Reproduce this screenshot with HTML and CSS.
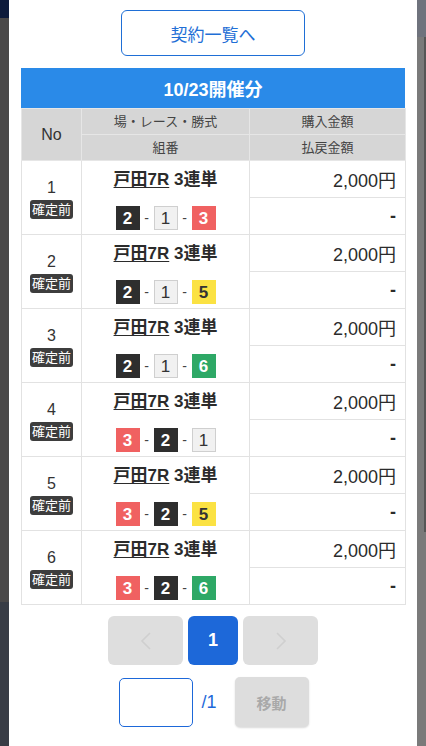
FILE: index.html
```html
<!DOCTYPE html>
<html lang="ja">
<head>
<meta charset="utf-8">
<title>契約一覧</title>
<link rel="stylesheet" href="styles.css">
</head>
<body>
<div class="screen">
  <div class="side-left">
    <div class="sl-top"></div>
    <div class="sl-mid"></div>
    <div class="sl-bot"></div>
  </div>
  <main class="modal">
    <div class="top-action">
      <button class="list-btn">契約一覧へ</button>
    </div>
    <div class="day-title">10/23開催分</div>
    <table class="bets">
      <colgroup><col class="c-no"><col class="c-race"><col class="c-amt"></colgroup>
      <thead>
        <tr><th rowspan="2" class="h-no">No</th><th>場・レース・勝式</th><th>購入金額</th></tr>
        <tr><th>組番</th><th>払戻金額</th></tr>
      </thead>
      <tbody>
        <tr><td rowspan="2" class="no"><div class="num">1</div><span class="badge">確定前</span></td>
          <td rowspan="2" class="race"><div class="race-name"><u>戸田7R</u> 3連単</div><div class="combo"><span class="b b2">2</span><span class="dash">-</span><span class="b b1">1</span><span class="dash">-</span><span class="b b3">3</span></div></td>
          <td class="amt">2,000円</td></tr>
        <tr><td class="pay">-</td></tr>
        <tr><td rowspan="2" class="no"><div class="num">2</div><span class="badge">確定前</span></td>
          <td rowspan="2" class="race"><div class="race-name"><u>戸田7R</u> 3連単</div><div class="combo"><span class="b b2">2</span><span class="dash">-</span><span class="b b1">1</span><span class="dash">-</span><span class="b b5">5</span></div></td>
          <td class="amt">2,000円</td></tr>
        <tr><td class="pay">-</td></tr>
        <tr><td rowspan="2" class="no"><div class="num">3</div><span class="badge">確定前</span></td>
          <td rowspan="2" class="race"><div class="race-name"><u>戸田7R</u> 3連単</div><div class="combo"><span class="b b2">2</span><span class="dash">-</span><span class="b b1">1</span><span class="dash">-</span><span class="b b6">6</span></div></td>
          <td class="amt">2,000円</td></tr>
        <tr><td class="pay">-</td></tr>
        <tr><td rowspan="2" class="no"><div class="num">4</div><span class="badge">確定前</span></td>
          <td rowspan="2" class="race"><div class="race-name"><u>戸田7R</u> 3連単</div><div class="combo"><span class="b b3">3</span><span class="dash">-</span><span class="b b2">2</span><span class="dash">-</span><span class="b b1">1</span></div></td>
          <td class="amt">2,000円</td></tr>
        <tr><td class="pay">-</td></tr>
        <tr><td rowspan="2" class="no"><div class="num">5</div><span class="badge">確定前</span></td>
          <td rowspan="2" class="race"><div class="race-name"><u>戸田7R</u> 3連単</div><div class="combo"><span class="b b3">3</span><span class="dash">-</span><span class="b b2">2</span><span class="dash">-</span><span class="b b5">5</span></div></td>
          <td class="amt">2,000円</td></tr>
        <tr><td class="pay">-</td></tr>
        <tr><td rowspan="2" class="no"><div class="num">6</div><span class="badge">確定前</span></td>
          <td rowspan="2" class="race"><div class="race-name"><u>戸田7R</u> 3連単</div><div class="combo"><span class="b b3">3</span><span class="dash">-</span><span class="b b2">2</span><span class="dash">-</span><span class="b b6">6</span></div></td>
          <td class="amt">2,000円</td></tr>
        <tr><td class="pay">-</td></tr>
      </tbody>
    </table>
    <nav class="pager">
      <button class="pg pg-arrow" aria-label="前へ"><svg width="12" height="20" viewBox="0 0 12 20"><path d="M10 2 L2 10 L10 18" fill="none" stroke="#cfcfcf" stroke-width="1.6"/></svg></button>
      <button class="pg pg-current">1</button>
      <button class="pg pg-arrow" aria-label="次へ"><svg width="12" height="20" viewBox="0 0 12 20"><path d="M2 2 L10 10 L2 18" fill="none" stroke="#cfcfcf" stroke-width="1.6"/></svg></button>
    </nav>
    <div class="jump">
      <input class="jump-input" type="text">
      <span class="jump-total">/1</span>
      <button class="jump-btn">移動</button>
    </div>
  </main>
  <div class="side-right">
    <div class="sr-top"></div>
    <div class="sr-body"></div>
  </div>
</div>
</body>
</html>
```

FILE: styles.css
```css
* { box-sizing: border-box; }
html, body { margin: 0; padding: 0; }
body {
  font-family: "Liberation Sans", "Noto Sans CJK JP", sans-serif;
  color: #333;
  background: #fff;
}
.screen {
  display: flex;
  width: 426px;
  height: 746px;
  overflow: hidden;
}
.side-left {
  width: 9px;
  display: flex;
  flex-direction: column;
}
.sl-top { height: 18px; background: #0e1b3b; }
.sl-mid { height: 584px; background: #4a4848; }
.sl-bot { flex: 1; background: #383c45; }
.side-right {
  width: 9px;
  display: flex;
  flex-direction: column;
}
.sr-top { height: 37px; background: #6f737d; }
.sr-body {
  flex: 1;
  background: #7a7a7a;
  display: flex;
  justify-content: flex-end;
}
.sr-body::after {
  content: "";
  width: 2px;
  height: 495px;
  background: #565656;
}
.modal {
  width: 408px;
  background: #fff;
  padding: 10px 12px 0;
}
.top-action {
  display: flex;
  justify-content: center;
  margin-bottom: 12px;
}
.list-btn {
  width: 184px;
  height: 46px;
  border: 1px solid #1f6fd6;
  border-radius: 6px;
  background: #fff;
  color: #1f6fd6;
  font-family: "Noto Sans CJK JP", sans-serif;
  font-size: 17px;
  padding: 0;
}
.day-title {
  height: 40px;
  background: #2a8ae8;
  color: #fff;
  font-weight: bold;
  font-size: 18px;
  display: flex;
  align-items: center;
  justify-content: center;
}
.bets {
  width: 384px;
  border-collapse: collapse;
  table-layout: fixed;
}
.c-no { width: 60px; }
.c-race { width: 168px; }
.c-amt { width: 156px; }
.bets th {
  background: #d6d6d6;
  border: 1px solid #e6e6e6;
  font-weight: normal;
  font-size: 13px;
  color: #444;
  height: 26px;
  padding: 0;
  line-height: 1;
}
.bets th.h-no { font-size: 16px; color: #333; }
.bets td {
  border: 1px solid #e2e2e2;
  padding: 0;
  height: 37px;
}
.no {
  text-align: center;
  vertical-align: middle;
}
.num {
  font-size: 16px;
  line-height: 18px;
  color: #333;
  margin-top: 2px;
}
.badge {
  display: inline-block;
  background: #3d3d3d;
  color: #fff;
  font-size: 13px;
  line-height: 19px;
  padding: 0 2px;
  border-radius: 3px;
  margin-top: 3px;
}
.race {
  text-align: center;
  vertical-align: top;
}
.race-name {
  font-size: 17px;
  font-weight: bold;
  line-height: 20px;
  margin-top: 9px;
  color: #2b2b2b;
}
.race-name u { text-underline-offset: 2px; }
.combo {
  display: flex;
  justify-content: center;
  align-items: center;
  margin-top: 16px;
}
.b {
  width: 24px;
  height: 24px;
  display: flex;
  align-items: center;
  justify-content: center;
  font-size: 17px;
  font-weight: bold;
  line-height: 1;
}
.b1 { background: #f1f1f1; border: 1px solid #cfcfcf; color: #333; font-weight: normal; }
.b2 { background: #2e2e2e; color: #fff; }
.b3 { background: #f06161; color: #fff; }
.b5 { background: #fbe243; color: #333; }
.b6 { background: #2ea866; color: #fff; }
.dash {
  width: 14px;
  text-align: center;
  font-size: 14px;
  color: #444;
}
.amt {
  text-align: right;
  font-size: 18px;
  padding-right: 9px !important;
  color: #2b2b2b;
}
.pay {
  text-align: right;
  font-size: 18px;
  font-weight: bold;
  padding-right: 9px !important;
  color: #2b2b2b;
}
.pager {
  display: flex;
  justify-content: center;
  gap: 5px;
  margin-top: 11px;
}
.pg {
  height: 49px;
  border: none;
  border-radius: 6px;
  padding: 0;
  display: flex;
  align-items: center;
  justify-content: center;
  font-family: inherit;
}
.pg-arrow { width: 75px; background: #dedede; }
.pg-current {
  width: 50px;
  background: #1d68d9;
  color: #fff;
  font-weight: bold;
  font-size: 18px;
}
.jump {
  display: flex;
  justify-content: center;
  align-items: center;
  margin-top: 12px;
  margin-left: 2px;
}
.jump-input {
  width: 74px;
  height: 49px;
  border: 1px solid #1d68d9;
  border-radius: 5px;
  outline: none;
}
.jump-total {
  color: #1d68d9;
  font-size: 18px;
  margin-left: 8px;
  margin-right: 18px;
}
.jump-btn {
  width: 74px;
  height: 50px;
  border: none;
  border-radius: 5px;
  background: #dddddd;
  color: #a9a9a9;
  font-family: "Noto Sans CJK JP", sans-serif;
  font-weight: bold;
  font-size: 15px;
  box-shadow: 0 1px 2px rgba(0,0,0,0.15);
}
```
